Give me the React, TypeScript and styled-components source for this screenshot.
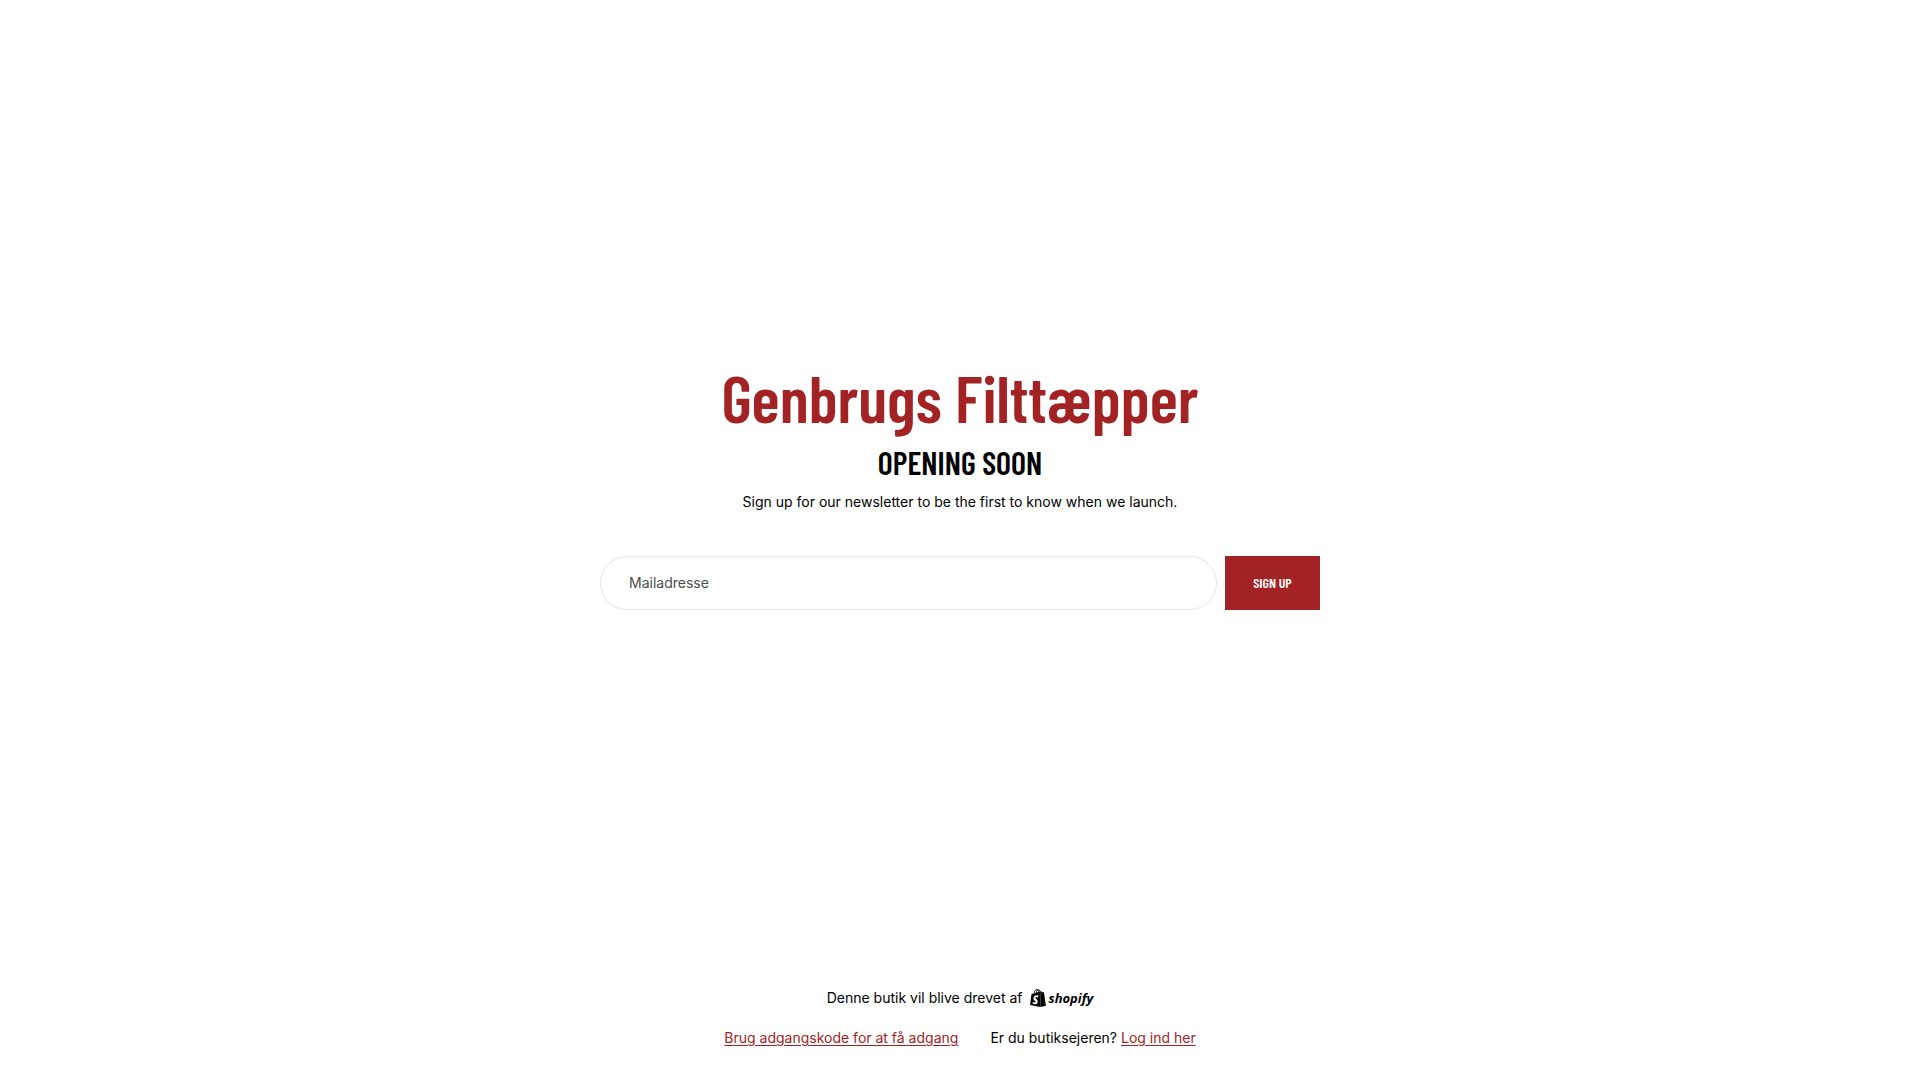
import React from 'react';
import styled, { createGlobalStyle } from 'styled-components';
import { SiShopify } from 'react-icons/si';

const red = '#a32324';
const condensed = "'Barlow Condensed', 'Roboto Condensed', 'Liberation Sans Narrow', Roboto, sans-serif";

const GlobalStyle = createGlobalStyle`
  *, *::before, *::after { box-sizing: border-box; }
  body {
    margin: 0;
    background: #fff;
    color: #000;
    font-family: Inter, sans-serif;
    font-size: 14px;
    line-height: 22px;
  }
`;

const Page = styled.div`
  min-height: 100vh;
  display: flex;
  flex-direction: column;
`;

const Main = styled.main`
  flex: 1;
  display: flex;
  flex-direction: column;
  align-items: center;
  justify-content: center;
  padding: 0 20px;
  text-align: center;
`;

const StoreName = styled.h1`
  margin: 0;
  color: ${red};
  font: 600 66px/68px ${condensed};
`;

const Heading = styled.h2`
  margin: 13px 0 11px;
  font: 600 32px/36px ${condensed};
  text-transform: uppercase;
`;

const Intro = styled.p`
  margin: 0;
`;

const Form = styled.form`
  display: flex;
  gap: 8px;
  width: 100%;
  max-width: 720px;
  margin-top: 43px;
`;

const EmailInput = styled.input`
  flex: 1;
  min-width: 0;
  height: 54px;
  padding: 0 28px 2px;
  border: 1px solid #e5e5e5;
  border-radius: 27px;
  background: #fff;
  color: #000;
  font: inherit;
  &::placeholder { color: #4d4d4d; opacity: 1; }
`;

const SubmitButton = styled.button`
  min-width: 95px;
  padding: 0 20px;
  border: 0;
  background: ${red};
  color: #fff;
  font: 600 14px/20px ${condensed};
  text-transform: uppercase;
  white-space: nowrap;
  cursor: pointer;
`;

const Footer = styled.footer`
  display: flex;
  flex-direction: column;
  align-items: center;
  gap: 18px;
  padding: 14px 20px 31px;
`;

const FooterRow = styled.div<{ $gap: number }>`
  display: flex;
  flex-wrap: wrap;
  align-items: center;
  justify-content: center;
  gap: ${({ $gap }) => $gap}px;
`;

const TextLink = styled.a`
  color: ${red};
  text-decoration: underline;
  text-underline-offset: 2px;
`;

const ShopifyLink = styled.a`
  display: flex;
  align-items: center;
  gap: 2px;
  color: #000;
  text-decoration: none;
`;

const Wordmark = styled.span`
  font: italic 700 13px/18px 'Open Sans', sans-serif;
`;

export default function App() {
  return (
    <>
      <GlobalStyle />
      <Page>
        <Main>
          <StoreName>Genbrugs Filttæpper</StoreName>
          <Heading>Opening soon</Heading>
          <Intro>Sign up for our newsletter to be the first to know when we launch.</Intro>
          <Form onSubmit={(event: React.FormEvent) => event.preventDefault()}>
            <EmailInput type="email" name="email" aria-label="Mailadresse" placeholder="Mailadresse" />
            <SubmitButton type="submit">Sign up</SubmitButton>
          </Form>
        </Main>
        <Footer>
          <FooterRow $gap={6}>
            <span>Denne butik vil blive drevet af</span>
            <ShopifyLink href="#shopify">
              <SiShopify size={18} aria-hidden="true" />
              <Wordmark>shopify</Wordmark>
            </ShopifyLink>
          </FooterRow>
          <FooterRow $gap={32}>
            <TextLink href="#password">Brug adgangskode for at få adgang</TextLink>
            <span>
              Er du butiksejeren? <TextLink href="#login">Log ind her</TextLink>
            </span>
          </FooterRow>
        </Footer>
      </Page>
    </>
  );
}
